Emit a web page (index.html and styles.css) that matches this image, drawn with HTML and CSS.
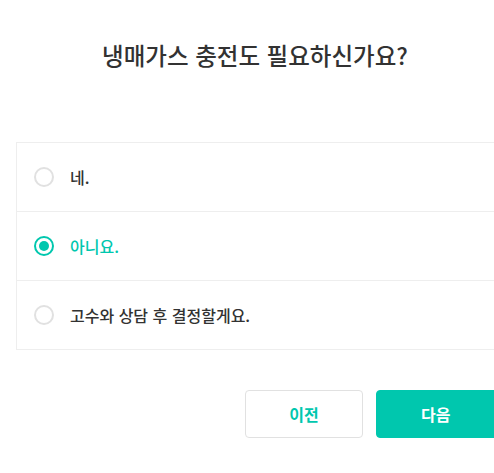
FILE: index.html
```html
<!DOCTYPE html>
<html lang="ko">
<head>
<meta charset="utf-8">
<link rel="stylesheet" href="styles.css">
</head>
<body>
<div class="page">
  <h1 class="title">냉매가스 충전도 필요하신가요?</h1>
  <ul class="options">
    <li class="option"><span class="radio"></span><span class="label">네.</span></li>
    <li class="option selected"><span class="radio"></span><span class="label">아니요.</span></li>
    <li class="option"><span class="radio"></span><span class="label">고수와 상담 후 결정할게요.</span></li>
  </ul>
  <div class="actions">
    <button class="btn btn-prev">이전</button>
    <button class="btn btn-next">다음</button>
  </div>
</div>
</body>
</html>
```
FILE: styles.css
```css
* { box-sizing: border-box; }
html, body { margin: 0; padding: 0; background: #fff; overflow: hidden; }
body {
  font-family: "Noto Sans CJK KR", "Noto Sans", sans-serif;
  color: #323232;
}
.page {
  margin-left: 16px;
  width: 520px;
}
.title {
  margin: 0;
  width: 478px;
  padding-top: 38px;
  height: 142px;
  font-size: 23.5px;
  line-height: 34px;
  font-weight: 500;
  text-align: center;
  color: #323232;
}
.options {
  list-style: none;
  margin: 0;
  padding: 0;
  border: 1px solid #eeeeee;
}
.option {
  display: flex;
  align-items: center;
  height: 69px;
  padding-left: 17px;
  border-top: 1px solid #eeeeee;
}
.option:first-child { border-top: none; height: 68px; }
.radio {
  width: 20px;
  height: 20px;
  border-radius: 50%;
  border: 2px solid #e1e1e1;
  flex: none;
  margin-right: 16px;
  position: relative;
}
.selected .radio { border-color: #00c7ae; }
.selected .radio::after {
  content: "";
  position: absolute;
  left: 3px; top: 3px;
  width: 10px; height: 10px;
  border-radius: 50%;
  background: #00c7ae;
}
.label {
  font-size: 16px;
  font-weight: 500;
  line-height: 22px;
  color: #323232;
}
.selected .label { color: #00c7ae; }
.actions {
  display: flex;
  gap: 13px;
  margin-top: 40px;
  padding-left: 229px;
}
.btn {
  height: 48px;
  border-radius: 4px;
  font-family: inherit;
  font-size: 16px;
  font-weight: 700;
  cursor: pointer;
  padding: 0;
}
.btn-prev {
  width: 118px;
  background: #fff;
  border: 1px solid #e1e1e1;
  color: #00c7ae;
}
.btn-next {
  width: 160px;
  background: #00c7ae;
  border: 1px solid #00c7ae;
  color: #fff;
  text-align: left;
  padding-left: 44px;
}
```
